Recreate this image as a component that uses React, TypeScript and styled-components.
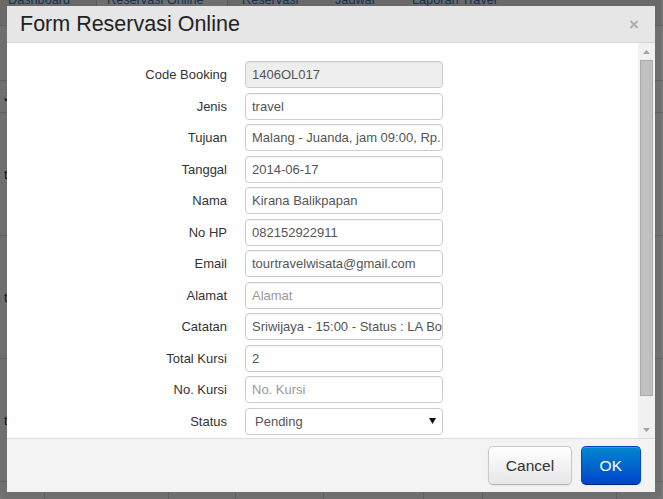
import React from "react";
import styled, { createGlobalStyle } from "styled-components";

const GlobalStyle = createGlobalStyle`
  html, body {
    margin: 0;
    padding: 0;
    background: #fff;
    overflow: hidden;
  }
  body {
    font-family: "Liberation Sans", Arial, sans-serif;
  }
  * {
    box-sizing: border-box;
  }
`;

// ---- page behind the modal ----

const Page = styled.div`
  width: 663px;
  height: 499px;
  overflow: hidden;
`;

const Nav = styled.nav`
  display: flex;
  margin-top: -10px;
  height: 36px;
  background: #f2f2f2;
  border-bottom: 1px solid #ddd;
`;

const NavItem = styled.a<{ $w: number; $pl: number; $active?: boolean; $sep?: boolean }>`
  flex: none;
  width: ${(p) => p.$w}px;
  padding-left: ${(p) => p.$pl}px;
  line-height: 20px;
  font-size: 12.7px;
  color: #2f74bd;
  white-space: nowrap;
  background: ${(p) => (p.$active ? "#fff" : "transparent")};
  border-right: ${(p) => (p.$sep ? "1px solid #ccc" : "none")};
`;

const Table = styled.div`
  margin-top: 54px;
`;

const TRow = styled.div<{ $h: number }>`
  display: grid;
  grid-template-columns: 44px 124px 67px 88px 100px 59px 134px 47px;
  height: ${(p) => p.$h}px;
  border-top: 1px solid #ddd;
`;

const TCell = styled.div<{ $head?: boolean }>`
  display: flex;
  align-items: center;
  padding-left: 4px;
  font-size: 13px;
  font-weight: ${(p) => (p.$head ? 700 : 400)};
  color: #333;

  & + & {
    border-left: 1px solid #ddd;
  }
`;

// ---- modal ----

const Backdrop = styled.div`
  position: fixed;
  inset: 0;
  background: rgba(0, 0, 0, 0.53);
`;

const Frame = styled.div`
  position: fixed;
  left: 0;
  top: -6px;
  width: 661px;
  height: 505px;
  padding: 12px 6px 7px 7px;
  border-radius: 6px;
  background: rgba(0, 0, 0, 0.08);
  display: flex;
`;

const Dialog = styled.div`
  flex: 1;
  display: flex;
  flex-direction: column;
  background: #fff;
`;

const Header = styled.div`
  flex: none;
  height: 37px;
  display: flex;
  align-items: center;
  justify-content: space-between;
  padding: 0 16px 0 13px;
  background: #e6e6e6;
  border-bottom: 1px solid #d4d4d4;
`;

const Title = styled.h3`
  margin: 0;
  font-size: 21.5px;
  font-weight: 400;
  color: #222;
`;

const Close = styled.span`
  font-size: 17px;
  font-weight: 700;
  color: #adadad;
  line-height: 1;
`;

const Body = styled.div`
  flex: 1;
  min-height: 0;
  display: flex;
`;

const FormArea = styled.div`
  flex: 1;
  overflow: hidden;
  padding-top: 18px;
`;

const Form = styled.div`
  display: grid;
  grid-template-columns: 220px 198px;
  grid-auto-rows: 27px;
  column-gap: 18px;
  row-gap: 4.5px;
  align-items: center;
`;

const Label = styled.label`
  text-align: right;
  font-size: 13px;
  color: #333;
`;

const Field = styled.input<{ $gray?: boolean }>`
  height: 27px;
  width: 198px;
  border: 1px solid #ccc;
  border-radius: 4px;
  padding: 0 0 0 6px;
  font-family: inherit;
  font-size: 13px;
  color: #555;
  background: ${(p) => (p.$gray ? "#eee" : "#fff")};
  box-shadow: inset 0 1px 1px rgba(0, 0, 0, 0.05);
  outline: none;

  &::placeholder {
    color: #999;
  }
`;

const SelectBox = styled.div`
  height: 27px;
  width: 198px;
  display: flex;
  align-items: center;
  justify-content: space-between;
  border: 1px solid #ccc;
  border-radius: 4px;
  padding: 0 6px 0 9px;
  font-size: 13px;
  color: #555;
  background: #fff;
`;

const Scrollbar = styled.div`
  flex: none;
  width: 17px;
  display: flex;
  flex-direction: column;
  background: #f1f1f1;
`;

const ScrollArrow = styled.div`
  height: 17px;
  display: flex;
  align-items: center;
  justify-content: center;
`;

const Thumb = styled.div`
  height: 336px;
  width: 13px;
  margin-left: 2px;
  background: #c1c1c1;
  border: 1px solid #ababab;
`;

const Spacer = styled.div`
  flex: 1;
`;

const Footer = styled.div`
  flex: none;
  height: 54px;
  display: flex;
  align-items: center;
  justify-content: flex-end;
  gap: 9px;
  padding: 0 14px;
  background: #f3f3f3;
  border-top: 1px solid #ddd;
`;

const Button = styled.button<{ $primary?: boolean }>`
  height: 39px;
  padding: 0 ${(p) => (p.$primary ? 18 : 16.5)}px;
  font-family: inherit;
  font-size: 15.5px;
  border-radius: 5px;
  cursor: pointer;
  color: ${(p) => (p.$primary ? "#fff" : "#333")};
  background: ${(p) =>
    p.$primary ? "linear-gradient(#0088cc, #0044cc)" : "linear-gradient(#ffffff, #e6e6e6)"};
  border: 1px solid ${(p) => (p.$primary ? "#0044cc" : "#c8c8c8")};
  border-bottom-color: ${(p) => (p.$primary ? "#002a80" : "#b3b3b3")};
  box-shadow: inset 0 1px 0 rgba(255, 255, 255, 0.2), 0 1px 2px rgba(0, 0, 0, 0.05);
`;

const fields = [
  { label: "Code Booking", value: "1406OL017", gray: true },
  { label: "Jenis", value: "travel" },
  { label: "Tujuan", value: "Malang - Juanda, jam 09:00, Rp. 100.000" },
  { label: "Tanggal", value: "2014-06-17" },
  { label: "Nama", value: "Kirana Balikpapan" },
  { label: "No HP", value: "082152922911" },
  { label: "Email", value: "tourtravelwisata@gmail.com" },
  { label: "Alamat", value: "", placeholder: "Alamat" },
  { label: "Catatan", value: "Sriwijaya - 15:00 - Status : LA Booked" },
  { label: "Total Kursi", value: "2" },
  { label: "No. Kursi", value: "", placeholder: "No. Kursi" },
];

const Triangle = ({ up, color, w, h }: { up?: boolean; color: string; w: number; h: number }) => (
  <svg width={w} height={h} viewBox={`0 0 ${w} ${h}`}>
    <polygon points={up ? `0,${h} ${w / 2},0 ${w},${h}` : `0,0 ${w},0 ${w / 2},${h}`} fill={color} />
  </svg>
);

export default function App() {
  return (
    <>
      <GlobalStyle />
      <Page>
        <Nav>
          <NavItem $w={97} $pl={8} $sep>Dashboard</NavItem>
          <NavItem $w={131} $pl={10} $active $sep>Reservasi Online</NavItem>
          <NavItem $w={93} $pl={14}>Reservasi</NavItem>
          <NavItem $w={77} $pl={14}>Jadwal</NavItem>
          <NavItem $w={122} $pl={14}>Laporan Travel</NavItem>
        </Nav>
        <Table>
          <TRow $h={32}>
            <TCell $head>Jenis</TCell>
            <TCell $head>Tujuan</TCell>
            <TCell $head>Tanggal</TCell>
            <TCell $head>Nama</TCell>
            <TCell $head>No HP</TCell>
            <TCell $head>Kursi</TCell>
            <TCell $head>Catatan</TCell>
            <TCell $head />
          </TRow>
          {[0, 1, 2, 3].map((i) => (
            <TRow key={i} $h={123}>
              <TCell>travel</TCell>
              <TCell />
              <TCell />
              <TCell />
              <TCell />
              <TCell />
              <TCell />
              <TCell />
            </TRow>
          ))}
        </Table>
      </Page>

      <Backdrop />
      <Frame>
        <Dialog>
          <Header>
            <Title>Form Reservasi Online</Title>
            <Close>×</Close>
          </Header>
          <Body>
            <FormArea>
              <Form>
                {fields.map((f) => (
                  <React.Fragment key={f.label}>
                    <Label>{f.label}</Label>
                    <Field
                      readOnly
                      $gray={f.gray}
                      value={f.value}
                      placeholder={f.placeholder}
                    />
                  </React.Fragment>
                ))}
                <Label>Status</Label>
                <SelectBox>
                  <span>Pending</span>
                  <Triangle color="#111" w={7} h={6} />
                </SelectBox>
              </Form>
            </FormArea>
            <Scrollbar>
              <ScrollArrow>
                <Triangle up color="#a3a3a3" w={7} h={4} />
              </ScrollArrow>
              <Thumb />
              <Spacer />
              <ScrollArrow>
                <Triangle color="#a3a3a3" w={7} h={4} />
              </ScrollArrow>
            </Scrollbar>
          </Body>
          <Footer>
            <Button>Cancel</Button>
            <Button $primary>OK</Button>
          </Footer>
        </Dialog>
      </Frame>
    </>
  );
}
